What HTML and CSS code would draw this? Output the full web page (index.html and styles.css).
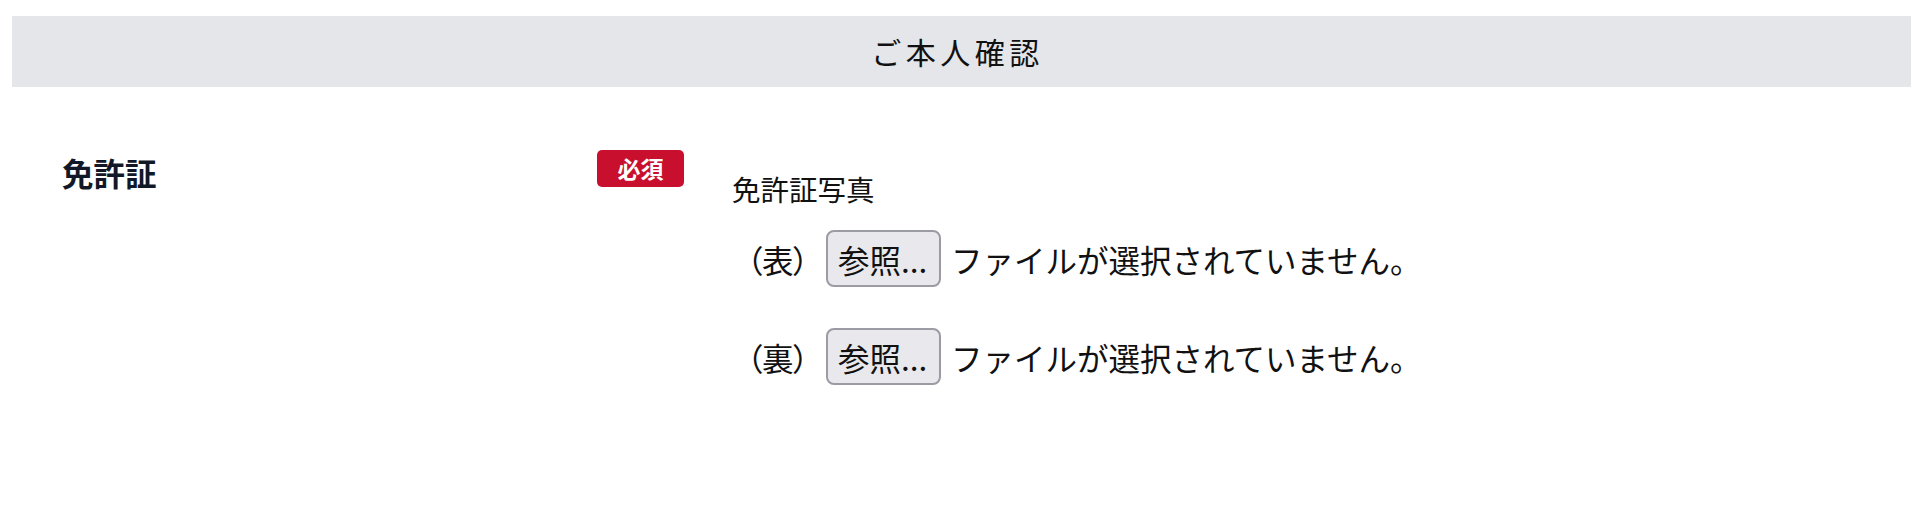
FILE: index.html
```html
<!DOCTYPE html>
<html lang="ja">
<head>
<meta charset="utf-8">
<title>ご本人確認</title>
<link rel="stylesheet" href="styles.css">
</head>
<body>
<div class="page">
  <h2 class="section-title">ご本人確認</h2>
  <div class="form-row">
    <div class="field-label">免許証</div>
    <div class="badge-cell"><span class="badge">必須</span></div>
    <div class="field-body">
      <div class="sub-label">免許証写真</div>
      <div class="file-row">
        <span class="side">（表）</span>
        <span class="file-btn">参照...</span>
        <span class="file-name">ファイルが選択されていません。</span>
      </div>
      <div class="file-row">
        <span class="side">（裏）</span>
        <span class="file-btn">参照...</span>
        <span class="file-name">ファイルが選択されていません。</span>
      </div>
    </div>
  </div>
</div>
</body>
</html>
```
FILE: styles.css
```css
html, body {
  margin: 0;
  padding: 0;
  background: #ffffff;
}
body {
  font-family: "Noto Sans CJK JP", "Noto Sans", sans-serif;
  color: #111111;
}
.page {
  padding: 16px 9px 0 12px;
}
.section-title {
  margin: 0;
  height: 71px;
  line-height: 71px;
  padding-right: 8px;
  background: #e4e6ea;
  text-align: center;
  font-size: 30px;
  font-weight: 400;
  letter-spacing: 4.5px;
  color: #111111;
}
.form-row {
  display: grid;
  grid-template-columns: 487px 87px 1fr;
  column-gap: 48px;
  padding: 63px 0 0 50px;
  align-items: start;
}
.field-label {
  font-size: 31.5px;
  font-weight: 700;
  line-height: 44px;
  color: #111827;
}
.badge {
  display: block;
  width: 87px;
  height: 37px;
  line-height: 37px;
  border-radius: 5px;
  background: #c8102e;
  color: #ffffff;
  font-size: 23px;
  font-weight: 700;
  text-align: center;
}
.field-body {
  padding-top: 19px;
  display: flex;
  flex-direction: column;
  gap: 41px;
}
.sub-label {
  font-size: 28.5px;
  line-height: 40px;
  margin-bottom: -20px;
}
.file-row {
  display: flex;
  align-items: center;
  font-size: 31.5px;
  height: 57px;
}
.side {
  width: 90px;
  margin-right: 4px;
  white-space: nowrap;
  letter-spacing: -1.5px;
}
.file-btn {
  box-sizing: border-box;
  height: 57px;
  width: 115px;
  padding: 0 10px;
  display: flex;
  align-items: center;
  border: 2px solid #9b9ba4;
  border-radius: 8px;
  background: #e9e9ed;
  color: #111111;
  white-space: nowrap;
  margin-right: 10px;
}
.file-name {
  white-space: nowrap;
}
```
